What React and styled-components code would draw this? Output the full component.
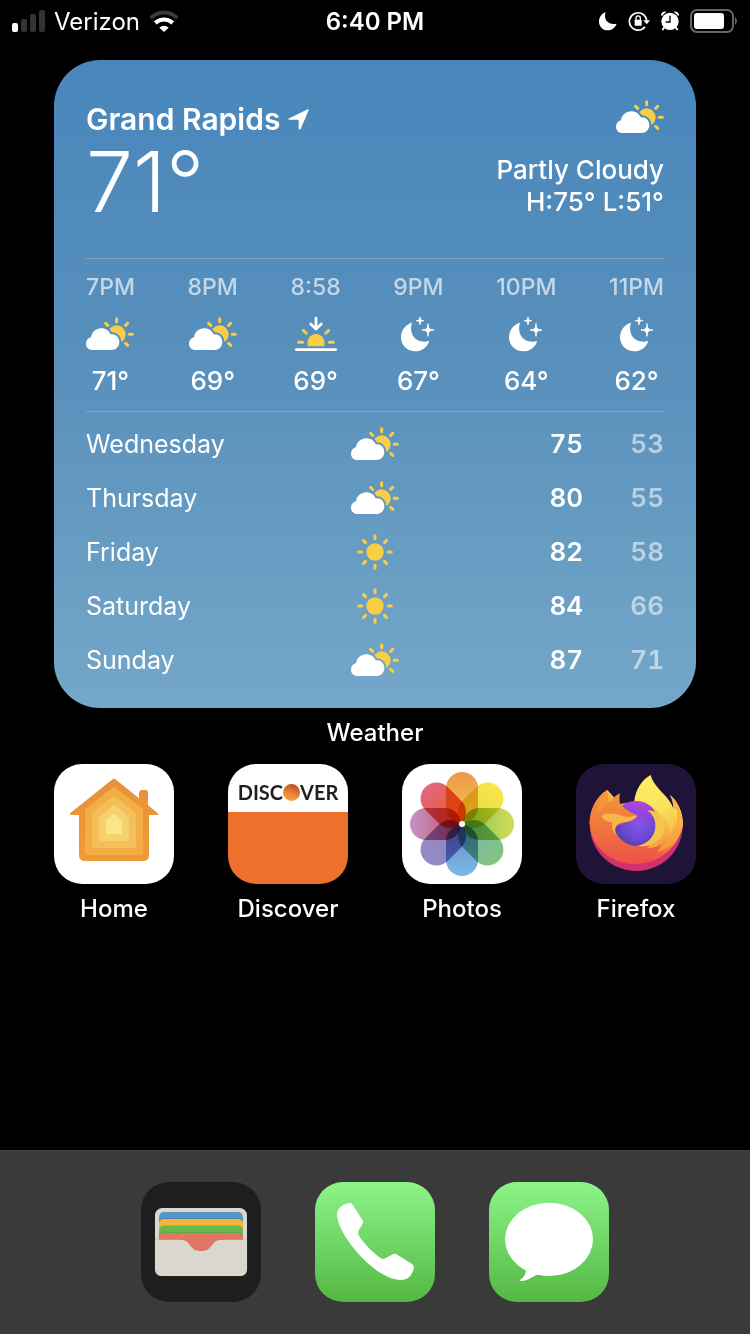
import { useId } from "react";
import styled, { createGlobalStyle } from "styled-components";

const GlobalStyle = createGlobalStyle`
  * {
    box-sizing: border-box;
  }
  body {
    margin: 0;
    background: #000000;
    color: #ffffff;
    font-family: Inter, "Liberation Sans", sans-serif;
  }
`;

const Style = {
  Screen: styled.div`
    min-height: 100vh;
    display: flex;
    flex-direction: column;
    background: #000000;
  `,
  StatusBar: styled.header`
    height: 40px;
    padding: 0 12px;
    display: grid;
    grid-template-columns: 1fr auto 1fr;
    align-items: center;
    font-size: 24px;
    line-height: 40px;
  `,
  StatusLeft: styled.div`
    display: flex;
    align-items: center;
    gap: 9px;
  `,
  StatusRight: styled.div`
    display: flex;
    align-items: center;
    justify-content: flex-end;
    gap: 10px;
  `,
  StatusText: styled.span`
    padding-top: 2px;
    font-weight: ${props => (props.$bold ? 600 : 400)};
  `,
  Main: styled.main`
    padding: 20px 54px 0;
  `,
  Widget: styled.section`
    padding: 40px 32px 21px;
    border-radius: 46px;
    background: linear-gradient(#4886bb, #5a91bc 50%, #74a7c9);
  `,
  Current: styled.div`
    display: flex;
    justify-content: space-between;
    padding-bottom: 32px;
    border-bottom: 1px solid rgba(190, 180, 170, 0.5);
  `,
  City: styled.h1`
    margin: 0;
    display: flex;
    align-items: center;
    gap: 8px;
    font-size: 30px;
    line-height: 38px;
    font-weight: 600;
  `,
  BigTemp: styled.div`
    font-size: 84px;
    line-height: 88px;
    font-weight: 300;
  `,
  Condition: styled.div`
    display: flex;
    flex-direction: column;
    align-items: flex-end;
    font-size: 26px;
    line-height: 32px;
    font-weight: 500;
    svg {
      margin-bottom: 20px;
    }
  `,
  Hourly: styled.ol`
    list-style: none;
    margin: 0;
    padding: 14px 0 16px;
    display: flex;
    justify-content: space-between;
    border-bottom: 1px solid rgba(255, 255, 255, 0.2);
  `,
  Hour: styled.li`
    display: flex;
    flex-direction: column;
    align-items: center;
    gap: 13px;
    line-height: 28px;
    font-size: 26px;
    font-weight: 500;
  `,
  HourLabel: styled.span`
    font-size: 23px;
    color: rgba(255, 255, 255, 0.65);
  `,
  HourIcon: styled.span`
    height: 40px;
    display: flex;
    align-items: center;
  `,
  Daily: styled.table`
    width: 100%;
    margin-top: 5px;
    table-layout: fixed;
    border-collapse: collapse;
    font-size: 26px;
    line-height: 32px;
    font-weight: 600;
    font-variant-numeric: tabular-nums;
    svg {
      display: block;
      margin: 0 auto;
    }
  `,
  Row: styled.tr`
    height: 54px;
  `,
  Day: styled.th`
    width: 40%;
    padding: 0;
    text-align: left;
    font-size: 25px;
    font-weight: 400;
  `,
  Cell: styled.td`
    width: ${props => props.$width};
    padding: 0;
    text-align: right;
    color: ${props => (props.$dim ? "rgba(255, 255, 255, 0.55)" : "#ffffff")};
  `,
  Label: styled.span`
    display: block;
    margin-top: 10px;
    font-size: 24px;
    line-height: 30px;
    font-weight: 500;
    text-align: center;
    white-space: nowrap;
  `,
  Apps: styled.nav`
    margin-top: 16px;
    display: flex;
    justify-content: space-between;
  `,
  App: styled.a`
    width: 120px;
    color: inherit;
    text-decoration: none;
  `,
  Tile: styled.span`
    display: flex;
    flex-direction: column;
    height: 120px;
    border-radius: 28px;
    overflow: hidden;
    background: ${props => props.$bg};
  `,
  Wordmark: styled.span`
    height: 48px;
    padding-top: 8px;
    display: flex;
    align-items: center;
    justify-content: center;
    color: #231f20;
    font-family: Lato, "Liberation Sans", sans-serif;
    font-size: 20px;
    line-height: 24px;
    font-weight: 700;
  `,
  Ball: styled.span`
    width: 17px;
    height: 17px;
    border-radius: 50%;
    background: linear-gradient(20deg, #f5b04b, #e8843a 45%, #c1481f 90%);
  `,
  Dock: styled.footer`
    margin-top: auto;
    padding: 31px 32px 32px;
    display: flex;
    justify-content: center;
    gap: 54px;
    background: #3a3a3a;
    border-top: 1px solid #454545;
  `,
};

const YELLOW = "#f8ce46";

const Rays = ({ cx, cy, inner, outer, angles }) => (
  <g stroke={YELLOW} strokeWidth="9" strokeLinecap="round">
    {angles.map((a) => {
      const x = Math.cos((a * Math.PI) / 180);
      const y = Math.sin((a * Math.PI) / 180);
      return (
        <line key={a} x1={cx + x * inner} y1={cy + y * inner} x2={cx + x * outer} y2={cy + y * outer} />
      );
    })}
  </g>
);

const CLOUD = "M20 99 C8 99 0 91 0 80 C0 70 6 63 15 61 C17 45 30 34 46 34 C59 34 69 41 74 52 C89 50 100 61 100 75 C100 89 90 99 76 99 Z";

const CloudSun = () => {
  const id = useId();
  return (
    <svg width="48" height="34" viewBox="0 0 144 102" aria-label="Partly cloudy">
      <mask id={id}>
        <rect width="144" height="102" fill="#fff" />
        <path d={CLOUD} fill="#000" stroke="#000" strokeWidth="12" />
      </mask>
      <circle cx="92" cy="52" r="27" fill={YELLOW} mask={`url(#${id})`} />
      <Rays cx={92} cy={52} inner={38} outer={47} angles={[-135, -90, -45, 0, 45]} />
      <path d={CLOUD} fill="#fff" />
    </svg>
  );
};

const Sun = () => (
  <svg width="36" height="36" viewBox="0 0 108 108" aria-label="Sunny">
    <circle cx="54" cy="54" r="26" fill={YELLOW} />
    <Rays cx={54} cy={54} inner={40} outer={49} angles={[0, 45, 90, 135, 180, 225, 270, 315]} />
  </svg>
);

const Sunset = () => (
  <svg width="42" height="36" viewBox="0 0 126 108" aria-label="Sunset">
    <path d="M38 91 C34 70 46 54 63 54 C80 54 92 70 88 91 Z" fill={YELLOW} />
    <Rays cx={63} cy={79} inner={40} outer={52} angles={[-180, -137, -43, 0]} />
    <path d="M63 6 V38 M47 24 L63 39 L79 24" fill="none" stroke="#fff" strokeWidth="8" strokeLinecap="round" strokeLinejoin="round" />
    <path d="M4 101 H122" stroke="#fff" strokeWidth="8" strokeLinecap="round" />
  </svg>
);

const MoonStars = () => (
  <svg width="34" height="36" viewBox="0 0 102 108" fill="#fff" aria-label="Clear night">
    <path d="M30 21 C33 19 33 21 32 24 C24 52 42 80 74 77 C79 76 84 73 84 77 C78 94 62 106 43 106 C19 106 0 88 0 64 C0 44 12 28 30 21 Z" />
    <path d="M57 3 C58 12 59 13 68 14 C59 15 58 16 57 26 C56 16 55 15 46 14 C55 13 56 12 57 3 Z" stroke="#fff" strokeWidth="3" />
    <path d="M81 23 C82 38 85 41 99 42 C85 43 82 46 81 61 C80 46 77 43 63 42 C77 41 80 38 81 23 Z" stroke="#fff" strokeWidth="3" />
  </svg>
);

const Signal = () => (
  <svg width="33" height="22" viewBox="0 0 33 22" aria-label="Signal">
    <rect x="0" y="13" width="6" height="9" rx="2" fill="#fff" />
    <rect x="9" y="9" width="6" height="13" rx="2" fill="#333" />
    <rect x="18" y="4" width="6" height="18" rx="2" fill="#333" />
    <rect x="27" y="0" width="6" height="22" rx="2" fill="#333" />
  </svg>
);

const Wifi = () => (
  <svg width="30" height="22" viewBox="0 0 90 66" fill="none" strokeWidth="12" aria-label="Wi-Fi">
    <path d="M5 24 C28 2 62 2 85 24" stroke="#3a3a3a" />
    <path d="M19 39 C34 25 56 25 71 39" stroke="#fff" />
    <path d="M45 66 L31 53 C39 45 51 45 59 53 Z" fill="#fff" />
  </svg>
);

const StatusMoon = () => (
  <svg width="20" height="20" viewBox="0 0 60 60" aria-label="Do not disturb">
    <path d="M23 4 C15 25 31 44 56 38 C51 50 42 58 29 58 C14 58 3 46 3 32 C3 18 11 8 23 4 Z" fill="#fff" />
  </svg>
);

const RotationLock = () => (
  <svg width="22" height="22" viewBox="0 0 66 66" aria-label="Rotation lock">
    <path d="M51 50 A26 26 0 1 1 56 31" fill="none" stroke="#fff" strokeWidth="5" />
    <path d="M46 31 H66 L56 43 Z" fill="#fff" />
    <rect x="20" y="29" width="21" height="18" rx="2" fill="#fff" />
    <path d="M24 31 V24 A6 6 0 0 1 37 24 V31" fill="none" stroke="#fff" strokeWidth="4" />
  </svg>
);

const Alarm = () => (
  <svg width="20" height="22" viewBox="0 0 60 66" aria-label="Alarm">
    <circle cx="30" cy="34" r="26" fill="#fff" />
    <path d="M3 15 C4 7 11 3 19 5 L5 18 Z M57 15 C56 7 49 3 41 5 L55 18 Z" fill="#fff" />
    <path d="M13 52 L7 60 M47 52 L53 60" stroke="#fff" strokeWidth="6" />
    <path d="M30 17 V36 H17" fill="none" stroke="#000" strokeWidth="4" />
  </svg>
);

const Battery = () => (
  <svg width="48" height="24" viewBox="0 0 48 24" aria-label="Battery">
    <rect x="1" y="1" width="42" height="22" rx="6" fill="none" stroke="#666" strokeWidth="2" />
    <rect x="4" y="4" width="30" height="16" rx="3" fill="#fff" />
    <path d="M45 8 Q49 12 45 16 Z" fill="#666" />
  </svg>
);

const LocationArrow = () => (
  <svg width="21" height="21" viewBox="0 0 63 63" aria-label="Current location">
    <path d="M1 29 L59 1 Q63 0 62 4 L38 60 Q33 64 32 58 V34 Q32 32 29 32 H5 Q-2 32 1 29 Z" fill="#fff" />
  </svg>
);

const HomeArt = () => (
  <svg viewBox="0 0 360 360" aria-hidden="true">
    <defs>
      <linearGradient id="home-wall" x1="0" y1="0" x2="0" y2="1">
        <stop offset="0" stopColor="#e8913b" />
        <stop offset="1" stopColor="#f09a36" />
      </linearGradient>
    </defs>
    <path
      d="M174 47 Q180 42 186 47 L255 103 V87 Q255 78 264 78 H274 Q282 78 282 87 V124 L310 146 Q315 153 308 153 H285 V273 Q285 291 267 291 H93 Q75 291 75 273 V153 H53 Q45 153 50 146 Z"
      fill="url(#home-wall)"
    />
    <path d="M176 71 Q180 67 184 71 L267 135 V265 Q267 273 259 273 H101 Q93 273 93 265 V135 Z" fill="#f2ae45" />
    <path d="M176 98 Q180 94 184 98 L246 147 V245 Q246 252 239 252 H121 Q114 252 114 245 V147 Z" fill="#f4bf5a" />
    <path d="M176 125 Q180 121 184 125 L225 158 V226 Q225 231 220 231 H140 Q135 231 135 226 V158 Z" fill="#f6d16c" />
    <path d="M176 152 Q180 148 184 152 L204 170 V206 Q204 210 200 210 H160 Q156 210 156 206 V170 Z" fill="#fae588" />
  </svg>
);

const PETALS = [
  { angle: 0, outer: "#ec9d4b", inner: "#f3c14a" },
  { angle: 45, outer: "#f8e648", inner: "#e3d84a" },
  { angle: 90, outer: "#cddb58", inner: "#93c35a" },
  { angle: 135, outer: "#83c285", inner: "#79bba8" },
  { angle: 180, outer: "#79b6e4", inner: "#6d8fc9" },
  { angle: 225, outer: "#928cc6", inner: "#9b80ba" },
  { angle: 270, outer: "#c68dc0", inner: "#c45e74" },
  { angle: 315, outer: "#e2657a", inner: "#ee5a35" },
];

const PhotosArt = () => (
  <svg viewBox="0 0 120 120" aria-hidden="true">
    <defs>
      {PETALS.map((p) => (
        <linearGradient key={p.angle} id={`petal-${p.angle}`} x1="0" y1="0" x2="0" y2="1">
          <stop offset="0.1" stopColor={p.outer} />
          <stop offset="0.8" stopColor={p.inner} />
        </linearGradient>
      ))}
    </defs>
    {PETALS.map((p) => (
      <rect
        key={p.angle}
        x="44"
        y="8"
        width="32"
        height="51"
        rx="16"
        fill={`url(#petal-${p.angle})`}
        transform={`rotate(${p.angle} 60 60)`}
        style={{ mixBlendMode: "multiply" }}
      />
    ))}
    <circle cx="60" cy="60" r="3" fill="#fff" />
  </svg>
);

const FirefoxArt = () => (
  <svg viewBox="0 0 360 360" aria-hidden="true">
    <defs>
      <linearGradient id="fx-body" x1="0.8" y1="0.1" x2="0.25" y2="0.95">
        <stop offset="0.1" stopColor="#fbe157" />
        <stop offset="0.4" stopColor="#f6a13e" />
        <stop offset="0.65" stopColor="#f0603f" />
        <stop offset="1" stopColor="#e33a68" />
      </linearGradient>
      <linearGradient id="fx-flame" x1="0.3" y1="0" x2="0.6" y2="1">
        <stop offset="0" stopColor="#fdf266" />
        <stop offset="0.5" stopColor="#f9dc58" />
        <stop offset="1" stopColor="#f2963f" />
      </linearGradient>
      <linearGradient id="fx-head" x1="0.3" y1="0" x2="0.3" y2="1">
        <stop offset="0" stopColor="#f3983a" />
        <stop offset="0.45" stopColor="#ef7a3c" />
        <stop offset="1" stopColor="#ee4f4b" />
      </linearGradient>
      <radialGradient id="fx-globe" cx="0.55" cy="0.5" r="0.6">
        <stop offset="0" stopColor="#8656ee" />
        <stop offset="0.6" stopColor="#6a49d0" />
        <stop offset="1" stopColor="#4c3a9c" />
      </radialGradient>
      <linearGradient id="fx-purple" x1="0" y1="0" x2="0" y2="1">
        <stop offset="0" stopColor="#b846e0" />
        <stop offset="0.6" stopColor="#a43fd8" stopOpacity="0" />
      </linearGradient>
    </defs>
    <path
      d="M94 78 C60 98 41 138 41 181 C41 260 104 321 181 321 C260 321 321 258 321 181 C321 146 306 112 282 93 C290 108 292 120 292 134 L240 110 L175 111 L132 120 Z"
      fill="#d3306f"
    />
    <path
      d="M94 78 C60 98 41 138 41 178 C48 250 104 300 180 300 C256 300 312 240 321 181 C321 146 306 112 282 93 C290 108 292 120 292 134 L240 110 L132 120 Z"
      fill="url(#fx-body)"
    />
    <path
      d="M175 112 C178 78 197 47 224 33 C230 66 272 92 287 122 C303 152 300 202 270 232 C250 252 220 262 200 262 C238 240 250 190 222 150 Z"
      fill="url(#fx-flame)"
    />
    <path d="M205 78 C206 60 213 43 224 33 C230 66 272 92 287 122 C300 150 298 190 280 215 C284 170 250 140 228 128 C212 118 205 100 205 78 Z" fill="#fcee67" opacity="0.3" />
    <path
      d="M303 140 C306 205 268 262 190 272 C240 276 300 250 318 192 C323 162 314 120 282 93 C290 110 293 124 292 132 Z"
      fill="#f5a83f"
      opacity="0.75"
    />
    <circle cx="180" cy="178" r="67" fill="url(#fx-globe)" />
    <circle cx="180" cy="178" r="67" fill="url(#fx-purple)" />
    <path d="M214 140 C222 138 230 140 237 143 L234 131 C258 150 270 180 262 205 C252 236 218 252 184 246 C220 238 240 212 238 180 C236 160 228 148 214 140 Z" fill="#f6c44c" />
    <path
      d="M94 78 C60 98 41 138 41 178 C46 246 98 295 165 300 C215 300 245 275 255 242 C230 256 195 256 165 245 C135 232 116 208 118 194 C120 180 140 178 155 173 C166 169 172 170 172 164 C182 161 184 158 180 153 C164 146 148 137 132 120 C130 109 130 98 132 88 C120 93 112 102 107 111 L98 113 C95 103 94 92 94 78 Z"
      fill="url(#fx-head)"
    />
    <path d="M76 156 C96 143 120 149 142 157 C156 161 169 158 180 153 C185 160 176 164 170 167 C155 176 143 173 134 176 C118 182 112 196 120 215 C111 204 106 190 109 174 C94 174 82 168 76 156 Z" fill="#f7b64a" />
    <path d="M94 78 C94 92 95 103 98 113 L107 111 C86 124 73 135 66 150 C62 124 72 96 94 78 Z" fill="#f6a33c" opacity="0.4" />
  </svg>
);

const WalletArt = () => (
  <svg viewBox="0 0 360 360" aria-hidden="true">
    <defs>
      <clipPath id="wallet-cards">
        <rect x="54" y="90" width="252" height="150" rx="14" />
      </clipPath>
    </defs>
    <rect x="42" y="78" width="276" height="204" rx="22" fill="#dad7ce" />
    <g clipPath="url(#wallet-cards)">
      <rect x="54" y="90" width="252" height="60" rx="14" fill="#5496c6" />
      <rect x="54" y="109" width="252" height="60" rx="14" fill="#3f7298" opacity="0.5" />
      <rect x="54" y="111" width="252" height="60" rx="14" fill="#f3b33e" />
      <rect x="54" y="130" width="252" height="60" rx="14" fill="#c58f2c" opacity="0.5" />
      <rect x="54" y="132" width="252" height="60" rx="14" fill="#68b84c" />
      <rect x="54" y="151" width="252" height="60" rx="14" fill="#4c8e36" opacity="0.5" />
      <rect x="54" y="153" width="252" height="90" rx="14" fill="#e37563" />
    </g>
    <path
      d="M42 173 H116 C138 173 142 183 150 193 C160 206 169 207 180 207 C191 207 200 206 210 193 C218 183 222 173 244 173 H318 V260 Q318 282 296 282 H64 Q42 282 42 260 Z"
      fill="#dad7ce"
      stroke="#a55a4c"
      strokeOpacity="0.35"
      strokeWidth="2"
      paintOrder="stroke"
    />
  </svg>
);

const PhoneArt = () => (
  <svg viewBox="0 0 360 360" fill="#fff" aria-hidden="true">
    <path d="M101 64 Q108 61 112 67 L142 113 Q146 120 142 127 L132 144 Q127 152 132 161 C146 184 172 209 195 227 Q203 233 211 229 L231 218 Q239 213 247 218 L291 246 Q299 251 296 260 C290 281 279 294 258 294 C212 294 155 247 118 201 C89 165 66 126 66 97 C66 79 82 67 101 64 Z" />
  </svg>
);

const MessagesArt = () => (
  <svg viewBox="0 0 360 360" fill="#fff" aria-hidden="true">
    <ellipse cx="180" cy="172" rx="132" ry="110" />
    <path d="M108 258 C114 272 106 284 94 293 C90 297 94 297 98 297 C116 296 129 286 140 280 C150 276 160 281 170 281 L150 240 Z" />
  </svg>
);

const HOURS = [
  { label: "7PM", temp: "71°", icon: CloudSun },
  { label: "8PM", temp: "69°", icon: CloudSun },
  { label: "8:58", temp: "69°", icon: Sunset },
  { label: "9PM", temp: "67°", icon: MoonStars },
  { label: "10PM", temp: "64°", icon: MoonStars },
  { label: "11PM", temp: "62°", icon: MoonStars },
];

const DAYS = [
  { day: "Wednesday", high: 75, low: 53, icon: CloudSun },
  { day: "Thursday", high: 80, low: 55, icon: CloudSun },
  { day: "Friday", high: 82, low: 58, icon: Sun },
  { day: "Saturday", high: 84, low: 66, icon: Sun },
  { day: "Sunday", high: 87, low: 71, icon: CloudSun },
];

const GREEN = "linear-gradient(#8cf488, #55b843)";
const DISCOVER = "linear-gradient(#ffffff 40%, #ed702d 40%)";

const WeatherWidget = () => (
  <Style.Widget>
    <Style.Current>
      <div>
        <Style.City>
          Grand Rapids
          <LocationArrow />
        </Style.City>
        <Style.BigTemp>71°</Style.BigTemp>
      </div>
      <Style.Condition>
        <CloudSun />
        <span>Partly Cloudy</span>
        <span>H:75° L:51°</span>
      </Style.Condition>
    </Style.Current>
    <Style.Hourly>
      {HOURS.map(({ label, temp, icon: Icon }) => (
        <Style.Hour key={label}>
          <Style.HourLabel>{label}</Style.HourLabel>
          <Style.HourIcon>
            <Icon />
          </Style.HourIcon>
          <span>{temp}</span>
        </Style.Hour>
      ))}
    </Style.Hourly>
    <Style.Daily>
      <tbody>
        {DAYS.map(({ day, high, low, icon: Icon }) => (
          <Style.Row key={day}>
            <Style.Day scope="row">{day}</Style.Day>
            <Style.Cell $width="20%">
              <Icon />
            </Style.Cell>
            <Style.Cell $width="26%">{high}</Style.Cell>
            <Style.Cell $width="14%" $dim>{low}</Style.Cell>
          </Style.Row>
        ))}
      </tbody>
    </Style.Daily>
  </Style.Widget>
);

const AppIcon = ({ name, bg, children }) => (
  <Style.App href="#">
    <Style.Tile $bg={bg}>{children}</Style.Tile>
    <Style.Label>{name}</Style.Label>
  </Style.App>
);

const DockIcon = ({ name, bg, children }) => (
  <Style.App href="#" aria-label={name}>
    <Style.Tile $bg={bg}>{children}</Style.Tile>
  </Style.App>
);

const App = () => {
  return (
    <Style.Screen>
      <GlobalStyle />
      <Style.StatusBar>
        <Style.StatusLeft>
          <Signal />
          <Style.StatusText>Verizon</Style.StatusText>
          <Wifi />
        </Style.StatusLeft>
        <Style.StatusText $bold>6:40 PM</Style.StatusText>
        <Style.StatusRight>
          <StatusMoon />
          <RotationLock />
          <Alarm />
          <Battery />
        </Style.StatusRight>
      </Style.StatusBar>

      <Style.Main>
        <WeatherWidget />
        <Style.Label>Weather</Style.Label>
        <Style.Apps>
          <AppIcon name="Home" bg="#ffffff">
            <HomeArt />
          </AppIcon>
          <AppIcon name="Discover" bg={DISCOVER}>
            <Style.Wordmark>
              DISC
              <Style.Ball />
              VER
            </Style.Wordmark>
          </AppIcon>
          <AppIcon name="Photos" bg="#ffffff">
            <PhotosArt />
          </AppIcon>
          <AppIcon name="Firefox" bg="#1f1437">
            <FirefoxArt />
          </AppIcon>
        </Style.Apps>
      </Style.Main>

      <Style.Dock>
        <DockIcon name="Wallet" bg="#1e1e1e">
          <WalletArt />
        </DockIcon>
        <DockIcon name="Phone" bg={GREEN}>
          <PhoneArt />
        </DockIcon>
        <DockIcon name="Messages" bg={GREEN}>
          <MessagesArt />
        </DockIcon>
      </Style.Dock>
    </Style.Screen>
  );
};

export default App;
